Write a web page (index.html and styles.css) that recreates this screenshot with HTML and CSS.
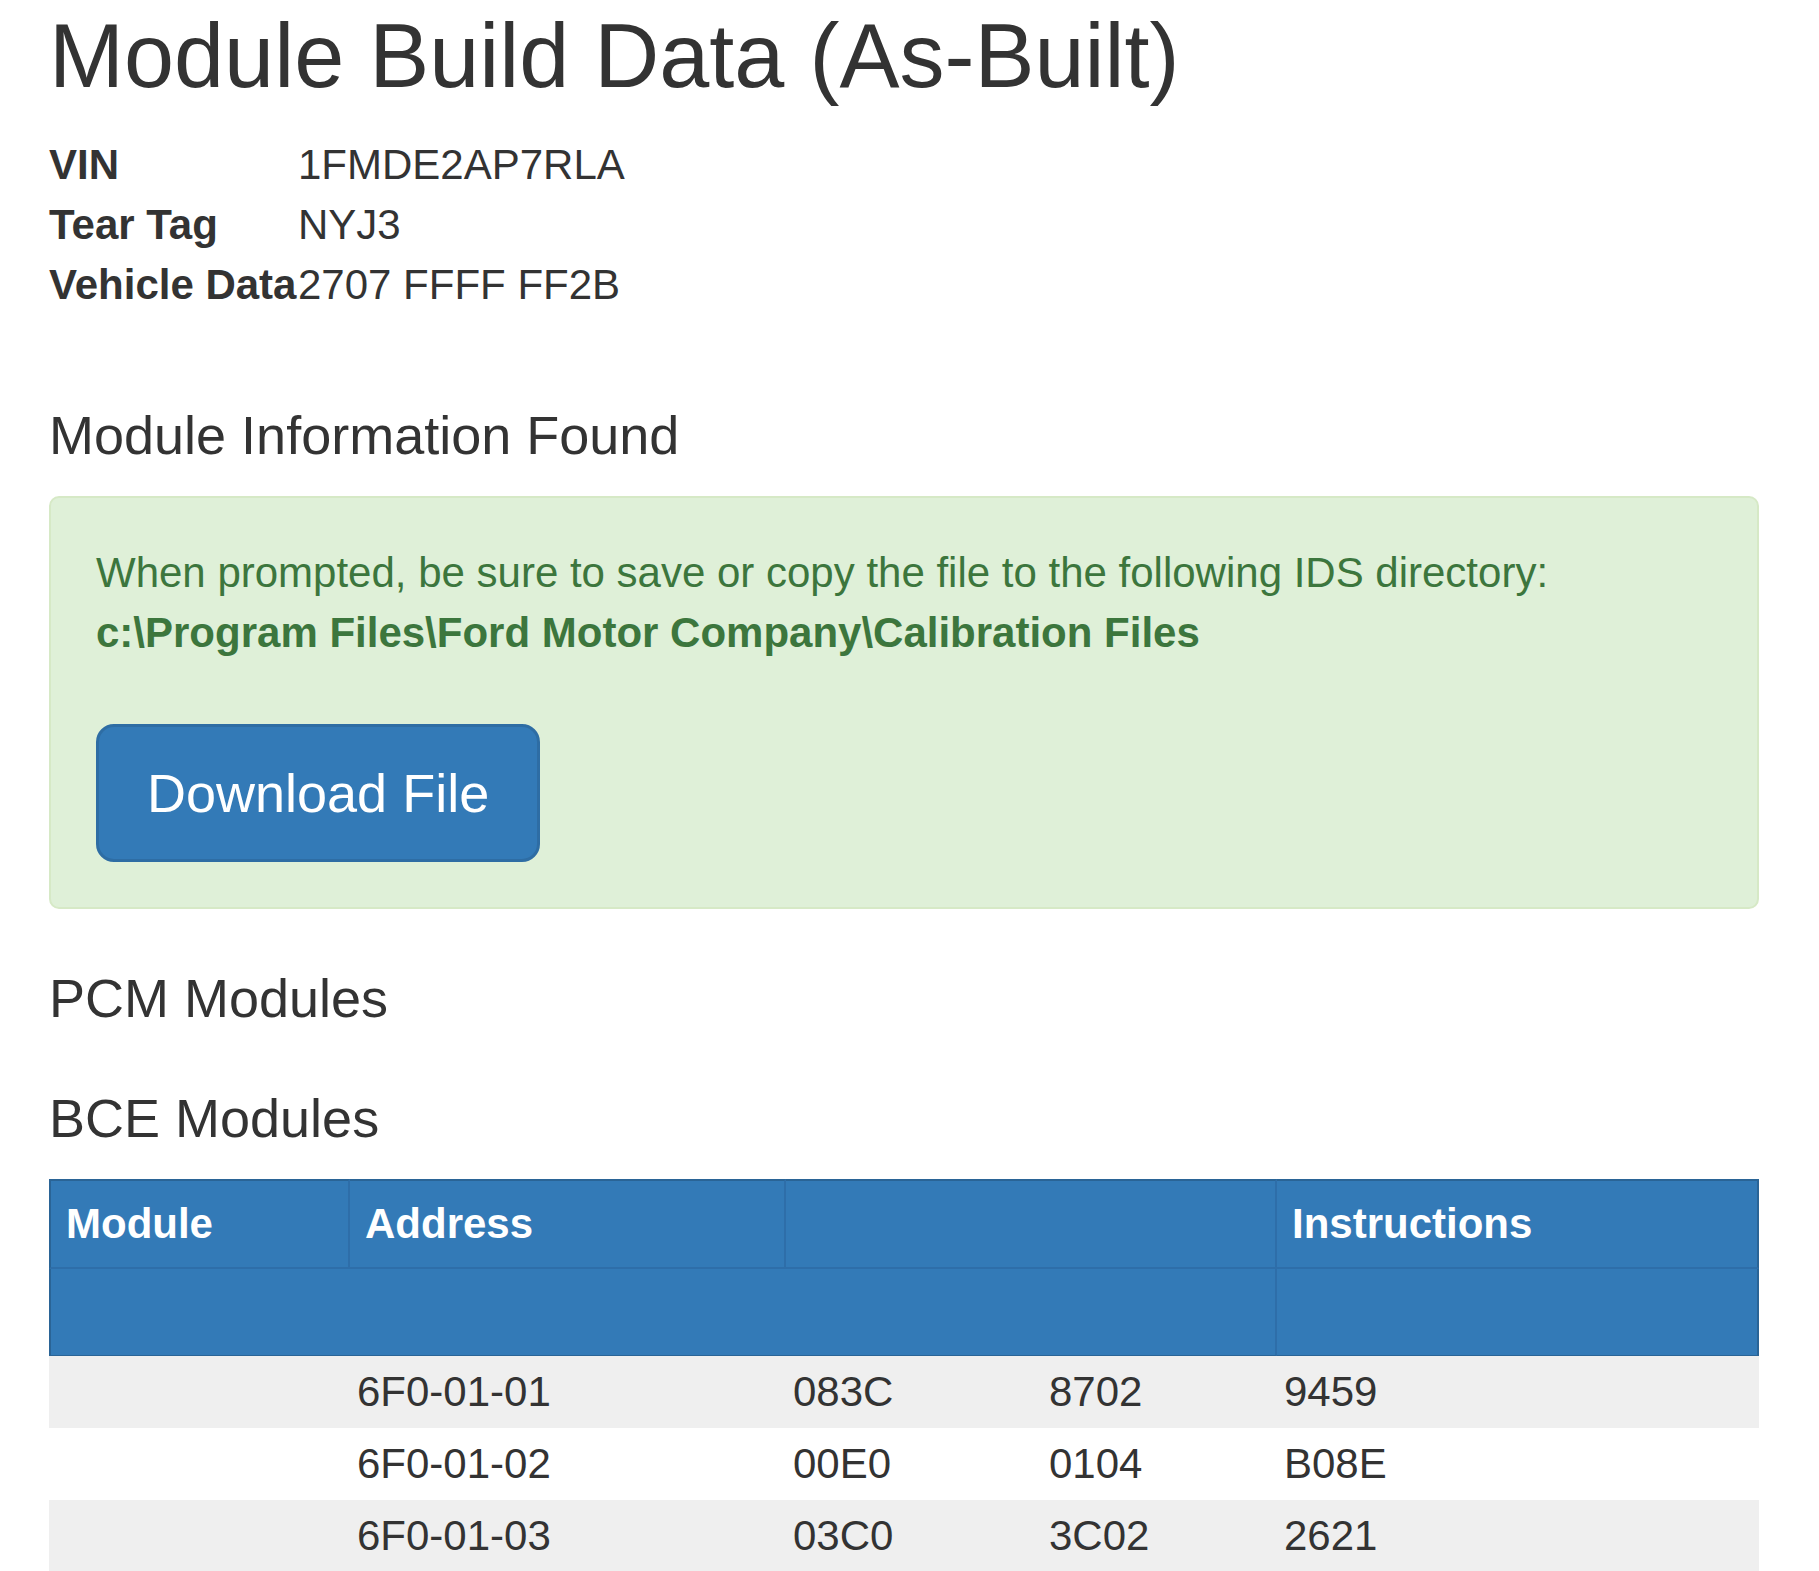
FILE: index.html
```html
<!DOCTYPE html>
<html lang="en">
<head>
<meta charset="utf-8">
<title>Module Build Data (As-Built)</title>
<link rel="stylesheet" href="styles.css">
</head>
<body>
<div class="container">
  <h1 class="page-title">Module Build Data (As-Built)</h1>
  <dl class="vehicle">
    <dt>VIN</dt><dd>1FMDE2AP7RLA</dd>
    <dt>Tear Tag</dt><dd>NYJ3</dd>
    <dt>Vehicle Data</dt><dd>2707 FFFF FF2B</dd>
  </dl>

  <h3 class="section">Module Information Found</h3>
  <div class="alert">
    <p class="alert-text">When prompted, be sure to save or copy the file to the following IDS directory:<br><strong>c:\Program Files\Ford Motor Company\Calibration Files</strong></p>
    <a class="btn" href="#">Download File</a>
  </div>

  <h3 class="section">PCM Modules</h3>
  <h3 class="section">BCE Modules</h3>

  <table class="modules">
    <colgroup>
      <col class="c1"><col class="c2"><col class="c3"><col class="c4"><col class="c5">
    </colgroup>
    <thead>
      <tr class="hr1">
        <th>Module</th>
        <th>Address</th>
        <th colspan="2"></th>
        <th>Instructions</th>
      </tr>
      <tr class="hr2">
        <th colspan="4"></th>
        <th></th>
      </tr>
    </thead>
    <tbody>
      <tr class="odd"><td></td><td>6F0-01-01</td><td>083C</td><td>8702</td><td>9459</td></tr>
      <tr><td></td><td>6F0-01-02</td><td>00E0</td><td>0104</td><td>B08E</td></tr>
      <tr class="odd"><td></td><td>6F0-01-03</td><td>03C0</td><td>3C02</td><td>2621</td></tr>
    </tbody>
  </table>
</div>
</body>
</html>
```

FILE: styles.css
```css
html, body {
  margin: 0;
  padding: 0;
  background: #ffffff;
}

body {
  font-family: "Liberation Sans", Arial, sans-serif;
  color: #333333;
  font-size: 42px;
  line-height: 60px;
}

.container {
  padding: 0 60px 0 49px;
}

.page-title {
  font-size: 90px;
  font-weight: 400;
  line-height: 99px;
  margin: 7px 0 29px 0;
}

.vehicle {
  display: grid;
  grid-template-columns: 249px 1fr;
  margin: 0 0 91px 0;
}

.vehicle dt {
  font-weight: 700;
  white-space: nowrap;
}

.vehicle dd {
  margin: 0;
}

.section {
  font-size: 54px;
  font-weight: 400;
  line-height: 59.4px;
  margin: 60px 0 31px 0;
}

.alert {
  background: #dff0d8;
  border: 2px solid #d6e9c6;
  border-radius: 10px;
  padding: 45px;
  color: #3c763d;
}

.alert-text {
  margin: 0 0 61px 0;
}

.alert-text strong {
  font-weight: 700;
}

.btn {
  display: inline-block;
  background: #337ab7;
  border: 3px solid #2e6da4;
  border-radius: 18px;
  color: #ffffff;
  text-decoration: none;
  font-size: 54px;
  line-height: 72px;
  padding: 30px 48px;
}

.modules {
  width: 1710px;
  table-layout: fixed;
  border-collapse: separate;
  border-spacing: 0;
  margin: 0;
}

.c1 { width: 301px; }
.c2 { width: 436px; }
.c3 { width: 256px; }
.c4 { width: 235px; }
.c5 { width: 482px; }

.modules th,
.modules td {
  box-sizing: border-box;
  text-align: left;
  vertical-align: top;
  line-height: 60px;
  font-size: 42px;
}

.modules th {
  background: #337ab7;
  color: #ffffff;
  font-weight: 700;
  padding: 13px 15px;
  border-right: 2px solid #2e6ea9;
  border-bottom: 2px solid #2e6ea9;
}

.modules th:first-child {
  border-left: 2px solid #2a6496;
}

.modules th:last-child {
  border-right: 2px solid #2a6496;
}

.modules .hr1 th {
  border-top: 2px solid #2a6496;
  height: 90px;
}

.modules .hr2 th {
  border-bottom: 1px solid #2a6496;
  height: 87px;
}

.modules td {
  padding: 6px 7px;
  color: #333333;
  white-space: nowrap;
}

.modules tr.odd td {
  background: #efefef;
}
```
